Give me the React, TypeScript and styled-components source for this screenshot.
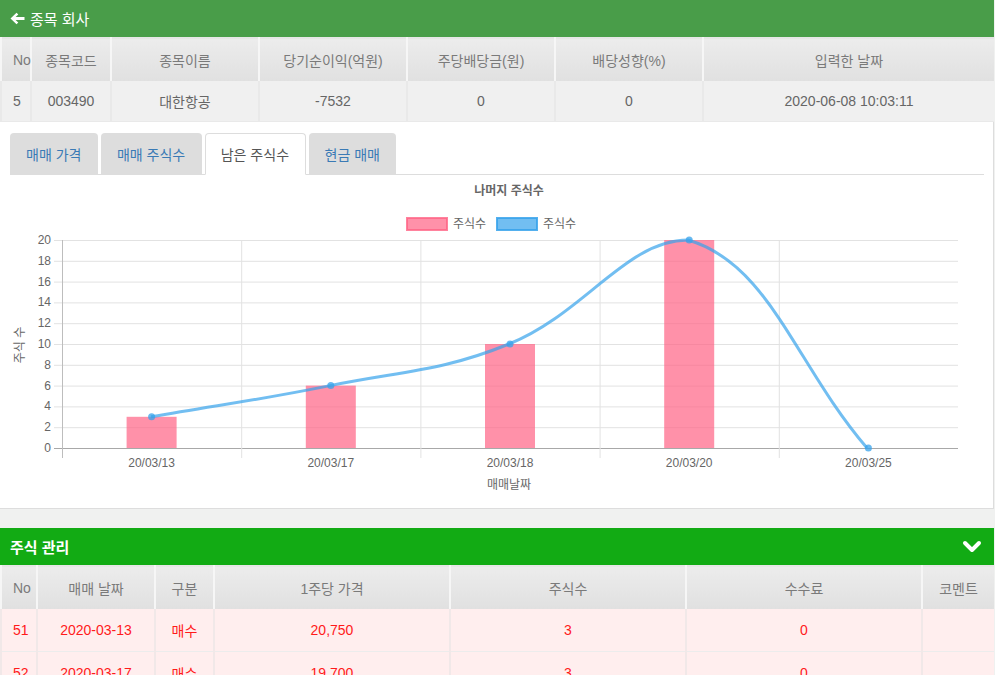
import React from "react";
import styled, { createGlobalStyle } from "styled-components";

const GlobalStyle = createGlobalStyle`
  html, body { margin: 0; padding: 0; }
  body {
    background: #f0f1f0;
    font-family: "Liberation Sans", "Noto Sans CJK KR", Arial, sans-serif;
    font-size: 14px;
    color: #666;
  }
`;

const Page = styled.div`
  width: 994px;
  display: flex;
  flex-direction: column;
`;

const TitleBar = styled.div<{ $bg: string; $bold?: boolean }>`
  height: 37px;
  flex-shrink: 0;
  background: ${(p) => p.$bg};
  color: #fff;
  display: flex;
  align-items: center;
  gap: 5px;
  padding: 0 12px 0 10px;
  font-size: 15px;
  font-weight: ${(p) => (p.$bold ? 700 : 400)};
`;

const TitleText = styled.span`
  flex: 1;
`;

const DataTable = styled.table`
  width: 993px;
  border-collapse: collapse;
  table-layout: fixed;
`;

const HeadCell = styled.th<{ $left?: boolean; $h: number }>`
  height: ${(p) => p.$h}px;
  padding: 0;
  padding-left: ${(p) => (p.$left ? "11px" : "0")};
  text-align: ${(p) => (p.$left ? "left" : "center")};
  font-weight: 400;
  font-size: 14px;
  color: #7a7a7a;
  background: linear-gradient(#ececec, #e0e0e0);
  border-left: 2px solid #f6f6f6;
  border-top: 1px solid #e6e6e6;
  white-space: nowrap;
`;

const BodyCell = styled.td<{ $left?: boolean; $h: number; $tone: "gray" | "red" }>`
  height: ${(p) => p.$h}px;
  padding: 0;
  padding-left: ${(p) => (p.$left ? "11px" : "0")};
  text-align: ${(p) => (p.$left ? "left" : "center")};
  font-size: 14px;
  color: ${(p) => (p.$tone === "red" ? "#ff1a1a" : "#666")};
  background: ${(p) => (p.$tone === "red" ? "#ffeeee" : "#f0f0f0")};
  border-left: 2px solid ${(p) => (p.$tone === "red" ? "#f1e8e8" : "#e9e9e9")};
  border-bottom: 1px solid ${(p) => (p.$tone === "red" ? "#ececec" : "#e9e9e9")};
  white-space: nowrap;
`;

const ChartPanel = styled.div`
  background: #fff;
  border-right: 1px solid #ddd;
  border-bottom: 1px solid #ddd;
  padding: 11px 9px 0 10px;
  display: flex;
  flex-direction: column;
`;

const TabList = styled.div`
  display: flex;
  border-bottom: 1px solid #ddd;
  height: 41px;
`;

const Tab = styled.div<{ $active?: boolean }>`
  box-sizing: border-box;
  height: ${(p) => (p.$active ? "42px" : "41px")};
  padding: 0 15.5px 0 15px;
  margin-right: 3px;
  display: flex;
  align-items: center;
  font-size: 14px;
  border-radius: 4px 4px 0 0;
  border: 1px solid ${(p) => (p.$active ? "#ddd" : "transparent")};
  border-bottom-color: ${(p) => (p.$active ? "#fff" : "transparent")};
  background: ${(p) => (p.$active ? "#fff" : "#ddd")};
  color: ${(p) => (p.$active ? "#555" : "#3a7ab5")};
  white-space: nowrap;
`;

const ChartSvg = styled.svg`
  display: block;
  margin-top: 3px;
  font-family: "Liberation Sans", "Noto Sans CJK KR", Arial, sans-serif;
`;

const Gap = styled.div`
  height: 19px;
  flex-shrink: 0;
`;

const Chevron = () => (
  <svg width="20" height="14" viewBox="0 0 20 14">
    <polyline points="3,3 10,10 17,3" fill="none" stroke="#fff" strokeWidth="4" strokeLinecap="round" strokeLinejoin="round" />
  </svg>
);

const ArrowLeft = () => (
  <svg width="15" height="13" viewBox="0 0 15 13">
    <path d="M0.5 6.5 L6.5 0.8 L8.3 2.6 L5.6 5.1 L14.5 5.1 L14.5 7.9 L5.6 7.9 L8.3 10.4 L6.5 12.2 Z" fill="#fff" />
  </svg>
);

const infoCols = [30, 80, 148, 148, 148, 148, 291];
const infoHead = ["No", "종목코드", "종목이름", "당기순이익(억원)", "주당배당금(원)", "배당성향(%)", "입력한 날짜"];
const infoRow = ["5", "003490", "대한항공", "-7532", "0", "0", "2020-06-08 10:03:11"];

const tradeCols = [36, 118, 59, 236, 236, 236, 72];
const tradeHead = ["No", "매매 날짜", "구분", "1주당 가격", "주식수", "수수료", "코멘트"];
const tradeRows = [
  ["51", "2020-03-13", "매수", "20,750", "3", "0", ""],
  ["52", "2020-03-17", "매수", "19,700", "3", "0", ""],
];

const tabs = ["매매 가격", "매매 주식수", "남은 주식수", "현금 매매"];

const labels = ["20/03/13", "20/03/17", "20/03/18", "20/03/20", "20/03/25"];
const values = [3, 6, 10, 20, 0];
const X0 = 62;
const X1 = 958;
const YB = 448;
const YT = 240;
const step = (X1 - X0) / 5;
const cx = (i: number) => X0 + step * (i + 0.5);
const cy = (v: number) => YB - ((YB - YT) * v) / 20;

const linePath =
  "M151,416.8 C222.6,404.3 258.8,400.1 330,385.6 C402,371 441.7,371.4 509,344 C584.9,313.2 626.4,240 688,240 C769.6,263.7 795.4,364.8 867,448";

const Chart = () => {
  const ticks = Array.from({ length: 11 }, (_, k) => k * 2);
  return (
    <ChartSvg width={975} height={330} viewBox="10 178 975 330">
      <text x={509} y={195} textAnchor="middle" fontSize={12} fontWeight={700} fill="#666">
        나머지 주식수
      </text>
      <rect x={407} y={218} width={40} height={12} fill="rgba(255,99,132,0.7)" stroke="rgba(255,99,132,0.8)" strokeWidth={2} />
      <text x={453} y={228} fontSize={12} fill="#666">주식수</text>
      <rect x={497} y={218} width={40} height={12} fill="rgba(54,162,235,0.7)" stroke="rgba(54,162,235,0.85)" strokeWidth={2} />
      <text x={543} y={228} fontSize={12} fill="#666">주식수</text>

      {ticks.map((t) => (
        <g key={t}>
          <line
            x1={54}
            x2={X1}
            y1={cy(t) + 0.5}
            y2={cy(t) + 0.5}
            stroke={t === 0 ? "#a8a8a8" : "#e2e2e2"}
            strokeWidth={1}
          />
          <text x={51} y={cy(t) + 4} textAnchor="end" fontSize={12} fill="#666">
            {t}
          </text>
        </g>
      ))}
      {[0, 1, 2, 3, 4].map((i) => (
        <line
          key={i}
          x1={X0 + step * i + 0.5}
          x2={X0 + step * i + 0.5}
          y1={YT}
          y2={458}
          stroke={i === 0 ? "#bdbdbd" : "#e2e2e2"}
          strokeWidth={1}
        />
      ))}
      {values.map((v, i) =>
        v > 0 ? (
          <rect key={i} x={cx(i) - 25} y={cy(v)} width={50} height={YB - cy(v)} fill="rgba(255,99,132,0.7)" />
        ) : null
      )}
      <path d={linePath} fill="none" stroke="rgba(54,162,235,0.7)" strokeWidth={3} />
      {values.map((v, i) => (
        <circle key={i} cx={cx(i)} cy={cy(v)} r={3.5} fill="rgba(54,162,235,0.75)" />
      ))}
      {labels.map((l, i) => (
        <text key={l} x={cx(i)} y={467} textAnchor="middle" fontSize={12} fill="#666">
          {l}
        </text>
      ))}
      <text x={509} y={489} textAnchor="middle" fontSize={12} fill="#666">
        매매날짜
      </text>
      <text x={20} y={349} textAnchor="middle" fontSize={12} fill="#666" transform="rotate(-90 20 345)">
        주식 수
      </text>
    </ChartSvg>
  );
};

export default function App() {
  return (
    <>
      <GlobalStyle />
      <Page>
        <TitleBar $bg="#499d49">
          <ArrowLeft />
          <TitleText>종목 회사</TitleText>
        </TitleBar>
        <DataTable>
          <colgroup>
            {infoCols.map((w, i) => (
              <col key={i} style={{ width: w }} />
            ))}
          </colgroup>
          <thead>
            <tr>
              {infoHead.map((h, i) => (
                <HeadCell key={h} $h={43} $left={i === 0}>
                  {h}
                </HeadCell>
              ))}
            </tr>
          </thead>
          <tbody>
            <tr>
              {infoRow.map((c, i) => (
                <BodyCell key={i} $h={40} $left={i === 0} $tone="gray">
                  {c}
                </BodyCell>
              ))}
            </tr>
          </tbody>
        </DataTable>
        <ChartPanel>
          <TabList>
            {tabs.map((t, i) => (
              <Tab key={t} $active={i === 2}>
                {t}
              </Tab>
            ))}
          </TabList>
          <Chart />
        </ChartPanel>
        <Gap />
        <TitleBar $bg="#12ab14" $bold>
          <TitleText>주식 관리</TitleText>
          <Chevron />
        </TitleBar>
        <DataTable>
          <colgroup>
            {tradeCols.map((w, i) => (
              <col key={i} style={{ width: w }} />
            ))}
          </colgroup>
          <thead>
            <tr>
              {tradeHead.map((h, i) => (
                <HeadCell key={h} $h={43} $left={i === 0}>
                  {h}
                </HeadCell>
              ))}
            </tr>
          </thead>
          <tbody>
            {tradeRows.map((r) => (
              <tr key={r[0]}>
                {r.map((c, i) => (
                  <BodyCell key={i} $h={42} $left={i === 0} $tone="red">
                    {c}
                  </BodyCell>
                ))}
              </tr>
            ))}
          </tbody>
        </DataTable>
      </Page>
    </>
  );
}
